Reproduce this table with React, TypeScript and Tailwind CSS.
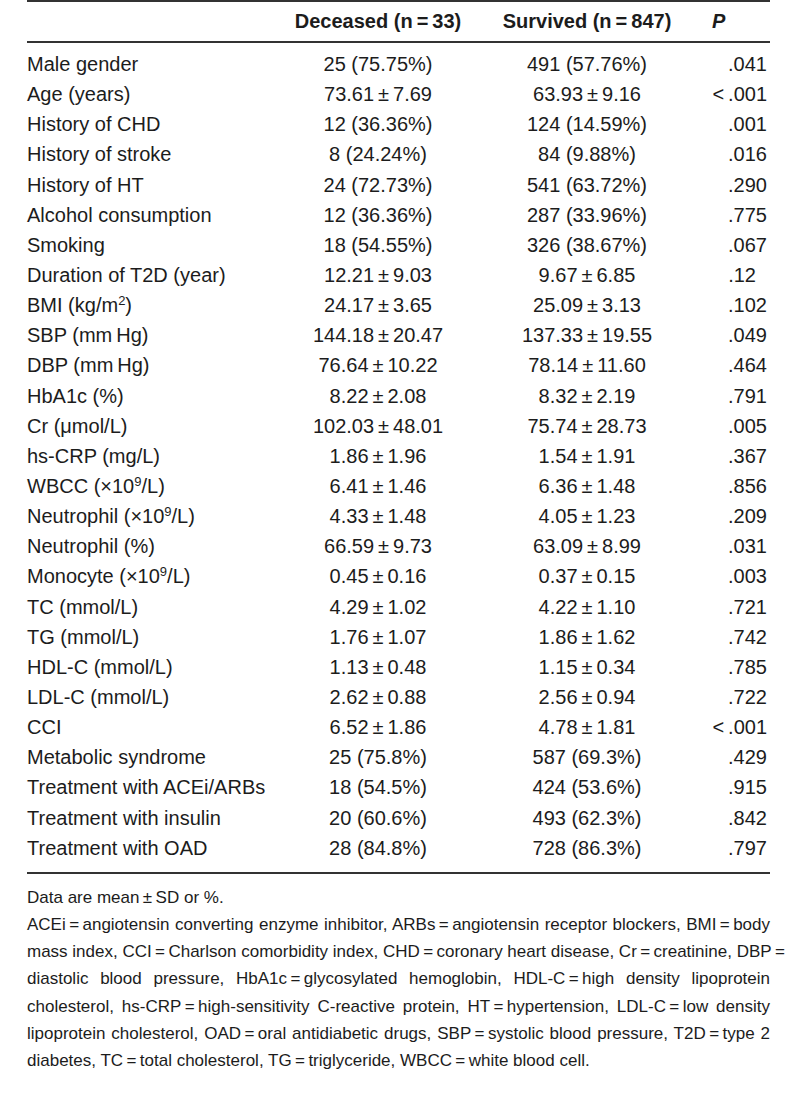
type Row = [React.ReactNode, string, string, string];

const pm = (a: string, b: string) => `${a}\u2009±\u2009${b}`;

const Sup = ({ children }: { children: React.ReactNode }) => (
  <sup className="text-[13px] relative -top-[7px]">{children}</sup>
);

const rows: Row[] = [
  ['Male gender', '25 (75.75%)', '491 (57.76%)', '.041'],
  ['Age (years)', pm('73.61', '7.69'), pm('63.93', '9.16'), '<\u2009.001'],
  ['History of CHD', '12 (36.36%)', '124 (14.59%)', '.001'],
  ['History of stroke', '8 (24.24%)', '84 (9.88%)', '.016'],
  ['History of HT', '24 (72.73%)', '541 (63.72%)', '.290'],
  ['Alcohol consumption', '12 (36.36%)', '287 (33.96%)', '.775'],
  ['Smoking', '18 (54.55%)', '326 (38.67%)', '.067'],
  ['Duration of T2D (year)', pm('12.21', '9.03'), pm('9.67', '6.85'), '.12'],
  [
    <>
      BMI (kg/m<Sup>2</Sup>)
    </>,
    pm('24.17', '3.65'),
    pm('25.09', '3.13'),
    '.102',
  ],
  ['SBP (mm\u2009Hg)', pm('144.18', '20.47'), pm('137.33', '19.55'), '.049'],
  ['DBP (mm\u2009Hg)', pm('76.64', '10.22'), pm('78.14', '11.60'), '.464'],
  ['HbA1c (%)', pm('8.22', '2.08'), pm('8.32', '2.19'), '.791'],
  ['Cr (μmol/L)', pm('102.03', '48.01'), pm('75.74', '28.73'), '.005'],
  ['hs-CRP (mg/L)', pm('1.86', '1.96'), pm('1.54', '1.91'), '.367'],
  [
    <>
      WBCC (×10<Sup>9</Sup>/L)
    </>,
    pm('6.41', '1.46'),
    pm('6.36', '1.48'),
    '.856',
  ],
  [
    <>
      Neutrophil (×10<Sup>9</Sup>/L)
    </>,
    pm('4.33', '1.48'),
    pm('4.05', '1.23'),
    '.209',
  ],
  ['Neutrophil (%)', pm('66.59', '9.73'), pm('63.09', '8.99'), '.031'],
  [
    <>
      Monocyte (×10<Sup>9</Sup>/L)
    </>,
    pm('0.45', '0.16'),
    pm('0.37', '0.15'),
    '.003',
  ],
  ['TC (mmol/L)', pm('4.29', '1.02'), pm('4.22', '1.10'), '.721'],
  ['TG (mmol/L)', pm('1.76', '1.07'), pm('1.86', '1.62'), '.742'],
  ['HDL-C (mmol/L)', pm('1.13', '0.48'), pm('1.15', '0.34'), '.785'],
  ['LDL-C (mmol/L)', pm('2.62', '0.88'), pm('2.56', '0.94'), '.722'],
  ['CCI', pm('6.52', '1.86'), pm('4.78', '1.81'), '<\u2009.001'],
  ['Metabolic syndrome', '25 (75.8%)', '587 (69.3%)', '.429'],
  ['Treatment with ACEi/ARBs', '18 (54.5%)', '424 (53.6%)', '.915'],
  ['Treatment with insulin', '20 (60.6%)', '493 (62.3%)', '.842'],
  ['Treatment with OAD', '28 (84.8%)', '728 (86.3%)', '.797'],
];

const eq = '\u2009=\u2009';

const noteLines = [
  `ACEi${eq}angiotensin converting enzyme inhibitor, ARBs${eq}angiotensin receptor blockers, BMI${eq}body`,
  `mass index, CCI${eq}Charlson comorbidity index, CHD${eq}coronary heart disease, Cr${eq}creatinine, DBP${eq}`,
  `diastolic blood pressure, HbA1c${eq}glycosylated hemoglobin, HDL-C${eq}high density lipoprotein`,
  `cholesterol, hs-CRP${eq}high-sensitivity C-reactive protein, HT${eq}hypertension, LDL-C${eq}low density`,
  `lipoprotein cholesterol, OAD${eq}oral antidiabetic drugs, SBP${eq}systolic blood pressure, T2D${eq}type 2`,
];

const cols = 'grid grid-cols-[250px_202px_216px_75px]';

export default function App() {
  return (
    <div className="w-[800px] h-[1097px] bg-white pl-[27px] pr-[30px] text-[#1c1c1c] font-['Liberation_Sans',Arial,sans-serif]">
      <div className="h-[2px] bg-[#333]" />

      {/* Header */}
      <div className={`${cols} h-[39px] items-center text-[20px] font-bold pb-[2px]`}>
        <div />
        <div className="text-center whitespace-nowrap">Deceased (n{eq}33)</div>
        <div className="text-center whitespace-nowrap">Survived (n{eq}847)</div>
        <div className="italic pl-[17px]">P</div>
      </div>
      <div className="h-[2px] bg-[#333]" />

      {/* Body */}
      <div className="pt-[6px] pb-[9px] text-[20px]">
        {rows.map((r, i) => (
          <div key={i} className={`${cols} h-[30.15px] items-center leading-none`}>
            <div className="whitespace-nowrap">{r[0]}</div>
            <div className="text-center whitespace-nowrap">{r[1]}</div>
            <div className="text-center whitespace-nowrap">{r[2]}</div>
            <div className={`text-right whitespace-nowrap ${r[3] === '.12' ? 'pr-[14px]' : 'pr-[3px]'}`}>{r[3]}</div>
          </div>
        ))}
      </div>
      <div className="h-[2px] bg-[#333]" />

      {/* Notes */}
      <div className="pt-[10px] text-[17px] leading-[27.2px]">
        <div>Data are mean{'\u2009'}±{'\u2009'}SD or %.</div>
        {noteLines.map((l) => (
          <div key={l} className="text-justify [text-align-last:justify] whitespace-nowrap">
            {l}
          </div>
        ))}
        <div>
          diabetes, TC{eq}total cholesterol, TG{eq}triglyceride, WBCC{eq}white blood cell.
        </div>
      </div>
    </div>
  );
}
